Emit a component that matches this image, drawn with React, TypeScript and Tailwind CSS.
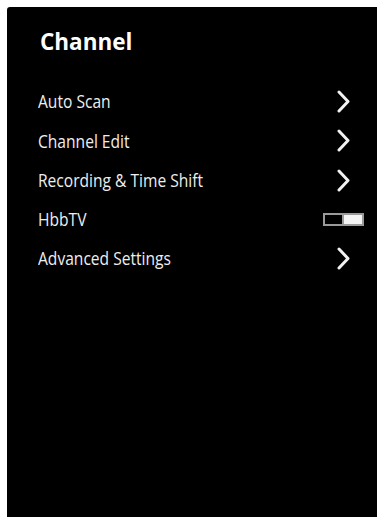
import React from "react";

const items: { label: string; kind: "chevron" | "toggle" }[] = [
  { label: "Auto Scan", kind: "chevron" },
  { label: "Channel Edit", kind: "chevron" },
  { label: "Recording & Time Shift", kind: "chevron" },
  { label: "HbbTV", kind: "toggle" },
  { label: "Advanced Settings", kind: "chevron" },
];

function Chevron() {
  return (
    <svg width="13" height="23" viewBox="0 0 13 23" fill="none">
      <polyline
        points="2,2 11,11.5 2,21"
        stroke="#f2f2f2"
        strokeWidth="3"
        strokeLinecap="round"
        strokeLinejoin="round"
      />
    </svg>
  );
}

function Toggle() {
  return (
    <div className="flex h-[13px] w-[41px] border-2 border-[#9a9a9a] bg-black">
      <div className="w-[19px] border-r-2 border-[#9a9a9a] bg-black" />
      <div className="flex-1 bg-[#f4f4f4]" />
    </div>
  );
}

export default function App() {
  return (
    <div className="min-h-[517px] w-[378px] bg-white pl-[7px] pt-[7px]">
      <div className="h-[510px] w-[370px] rounded-tl-[3px] bg-black pt-[21px]">
        <div
          className="pl-[33px] text-[22.5px] font-bold leading-[28px] text-white"
          style={{ fontFamily: '"Open Sans", sans-serif' }}
        >
          Channel
        </div>
        <div className="mt-[26px]">
          {items.map((it) => (
            <div key={it.label} className="flex h-[39.25px] items-center pl-[31px] pr-[13px]">
              <div className="flex-1">
                <div
                  className="origin-left scale-x-[0.82] whitespace-nowrap text-[19px] font-medium text-[#eeeeee]"
                  style={{ fontFamily: '"Open Sans", sans-serif' }}
                >
                  {it.label}
                </div>
              </div>
              <div className="flex w-[41px] justify-center">
                {it.kind === "chevron" ? <Chevron /> : <Toggle />}
              </div>
            </div>
          ))}
        </div>
      </div>
    </div>
  );
}
